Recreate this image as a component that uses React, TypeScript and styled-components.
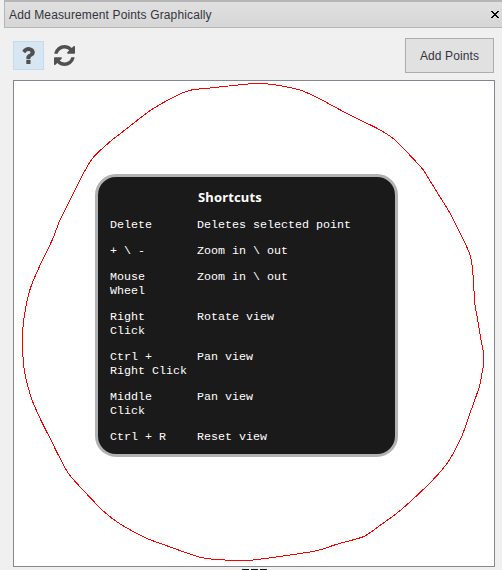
import React from "react";
import styled, { createGlobalStyle } from "styled-components";

const GlobalStyle = createGlobalStyle`
  * { box-sizing: border-box; }
  html, body { margin: 0; padding: 0; overflow: hidden; }
  body { background: #f0f0f0; font-family: "Liberation Sans", Arial, sans-serif; }
`;

const Window = styled.div`
  display: flex;
  flex-direction: column;
  width: 502px;
  height: 570px;
  overflow: hidden;
  background: #f0f0f0;
`;

const TitleBar = styled.header`
  display: flex;
  align-items: center;
  justify-content: space-between;
  flex: none;
  height: 28px;
  margin-left: 4px;
  padding: 0 3px 0 4px;
  border: solid #b5b5b5;
  border-width: 2px 0 1px 1px;
  background: linear-gradient(#e0e0e0, #d6d6d6);
`;

const Title = styled.h1`
  margin: 0;
  color: #34343c;
  font-size: 12px;
  font-weight: 400;
  line-height: 14px;
  letter-spacing: 0.135px;
  white-space: nowrap;
`;

const CloseButton = styled.button`
  display: flex;
  padding: 0;
  border: 0;
  background: none;
`;

const Toolbar = styled.div`
  display: flex;
  align-items: center;
  flex: none;
  height: 52px;
  padding: 3px 8px 0 13px;
`;

const ToolButton = styled.button<{ $active?: boolean }>`
  display: flex;
  align-items: center;
  justify-content: center;
  width: 31px;
  height: 29px;
  margin-right: 5px;
  padding: 0 0 1px;
  color: #505050;
  border: 1px solid ${(p) => (p.$active ? "#c0dcf3" : "transparent")};
  background: ${(p) => (p.$active ? "#d8e6f2" : "transparent")};
`;

const ActionButton = styled.button`
  width: 89px;
  height: 35px;
  margin-left: auto;
  padding: 0;
  color: #34343c;
  border: 1px solid #adadad;
  background: #e1e1e1;
  font: 12px/14px "Liberation Sans", Arial, sans-serif;
  letter-spacing: 0.12px;
`;

const Viewport = styled.main`
  position: relative;
  flex: none;
  width: 482px;
  height: 487px;
  margin-left: 13px;
  border: 1px solid #828790;
  background: #fff;
`;

const Outline = styled.svg`
  display: block;
  width: 480px;
  height: 485px;
`;

const ShortcutCard = styled.section`
  position: absolute;
  left: 81px;
  top: 93px;
  width: 303px;
  height: 283px;
  padding: 12px 12px 0;
  color: #fff;
  border: 3px solid #b2b2b2;
  border-radius: 21px;
  background: #1a1a1a;
`;

const CardTitle = styled.h2`
  margin: 0 0 13px 88px;
  font: 700 13px/16px "Noto Sans", "Open Sans", sans-serif;
  letter-spacing: 0.15px;
`;

const ShortcutList = styled.dl`
  display: grid;
  grid-template-columns: 87px 1fr;
  row-gap: 12px;
  margin: 0;
  font: 11.67px/14px "Courier New", "Liberation Mono", monospace;
`;

const Keys = styled.dt`
  white-space: pre;
`;

const Description = styled.dd`
  margin: 0;
  white-space: nowrap;
`;

const Grip = styled.div`
  display: flex;
  gap: 2px;
  margin: 2px 0 0 242px;
`;

const GripMark = styled.span`
  width: 7px;
  height: 1px;
  background: #111;
`;

const shortcuts = [
  { keys: "Delete", action: "Deletes selected point" },
  { keys: "+ \\ -", action: "Zoom in \\ out" },
  { keys: "Mouse\nWheel", action: "Zoom in \\ out" },
  { keys: "Right\nClick", action: "Rotate view" },
  { keys: "Ctrl +\nRight Click", action: "Pan view" },
  { keys: "Middle\nClick", action: "Pan view" },
  { keys: "Ctrl + R", action: "Reset view" },
];

const outlinePoints =
  "238,85 210,88 190,90.3 173.3,97.3 150,110.7 125,130 110,141.7 93.3,157.3 84,172.3 71.7,196.7 60,220 52.7,239 38.3,269 30.7,287.3 27.3,300 23.7,320 22.5,337 22.7,353 24.3,370 26.7,381.7 31.7,399 40,418.3 50,438.3 60,458.3 68.3,473.3 78.3,485 104,511.7 121.7,525 146.7,538.3 166.7,545.7 196.7,556.3 213.3,559.3 233.3,560.3 250,560.3 283.3,556 316.7,550.7 336.7,544.3 363.3,536.7 378.3,526.7 398.3,512 416.7,495.7 435,477.7 446.7,464 452.3,455 461.7,436.7 470,413.3 479.3,386.7 482.3,371.7 483.5,365 483.5,353.3 481,340 477.7,320 475,305 473.5,281.7 472.3,266.7 470,255 466.7,246.7 451,215 436.7,191.7 423.3,170 415,160.7 395,140 378.3,129 353.3,116.7 336.7,108 316.7,97.3 300,90 280,85.7 265,83.7 251.7,83.7";

// Closed curve through every point, with tangents taken from the neighbours.
function smoothClosedPath(points: string) {
  const pts = points.split(" ").map((p) => p.split(",").map(Number));
  const at = (i: number) => pts[(i + pts.length) % pts.length];
  const segments = pts.map((p, i) => {
    const prev = at(i - 1);
    const next = at(i + 1);
    const after = at(i + 2);
    const c1 = [0, 1].map((k) => p[k] + (next[k] - prev[k]) / 8);
    const c2 = [0, 1].map((k) => next[k] - (after[k] - p[k]) / 8);
    return `C${c1} ${c2} ${next}`;
  });
  return `M${pts[0]}${segments.join("")}Z`;
}

const outlinePath = smoothClosedPath(outlinePoints);

const QuestionIcon = () => (
  <svg width="13" height="17" viewBox="80 192 940 1280" fill="currentColor">
    <path d="M704 1192v240q0 16-12 28t-28 12h-240q-16 0-28-12t-12-28v-240q0-16 12-28t28-12h240q16 0 28 12t12 28zm316-600q0 54-15.5 101t-35 76.5-55 59.5-57.5 43.5-61 35.5q-41 23-68.5 65t-27.5 67q0 17-12 32.5t-28 15.5h-240q-15 0-25.5-18.5t-10.5-37.5v-45q0-83 65-156.5t143-108.5q59-27 84-56t25-76q0-42-46.5-74t-107.5-32q-65 0-108 29-35 25-107 115-13 16-31 16-12 0-25-8l-164-125q-13-10-15.5-25t5.5-28q160-266 464-266 80 0 161 31t146 83 106 127.5 41 158.5z" />
  </svg>
);

const RefreshIcon = () => (
  <svg width="21" height="21" viewBox="0 0 1536 1536" fill="currentColor">
    <path d="M1511 928q0 5-1 7-64 268-268 434.5t-478 166.5q-146 0-282.5-55t-243.5-157l-129 129q-19 19-45 19t-45-19-19-45v-448q0-26 19-45t45-19h448q26 0 45 19t19 45-19 45l-137 137q71 66 161 102t187 36q134 0 250-65t186-179q11-17 53-117 8-23 30-23h192q13 0 22.5 9.5t9.5 22.5zm25-800v448q0 26-19 45t-45 19h-448q-26 0-45-19t-19-45 19-45l138-138q-148-137-349-137-134 0-250 65t-186 179q-11 17-53 117-8 23-30 23h-199q-13 0-22.5-9.5t-9.5-22.5v-7q65-268 270-434.5t480-166.5q146 0 284 55.5t245 156.5l130-129q19-19 45-19t45 19 19 45z" />
  </svg>
);

const CloseIcon = () => (
  <svg width="8" height="7" viewBox="0 0 8 7" shapeRendering="crispEdges">
    <path
      d="M0 0h2v1h1v1h2v-1h1v-1h2v1h-1v1h-1v1h-1v1h1v1h1v1h1v1h-2v-1h-1v-1h-2v1h-1v1h-2v-1h1v-1h1v-1h1v-1h-1v-1h-1v-1h-1z"
      fill="#000"
    />
  </svg>
);

export default function App() {
  return (
    <>
      <GlobalStyle />
      <Window>
        <TitleBar>
          <Title>Add Measurement Points Graphically</Title>
          <CloseButton aria-label="Close">
            <CloseIcon />
          </CloseButton>
        </TitleBar>
        <Toolbar>
          <ToolButton $active aria-label="Help">
            <QuestionIcon />
          </ToolButton>
          <ToolButton aria-label="Refresh">
            <RefreshIcon />
          </ToolButton>
          <ActionButton>Add Points</ActionButton>
        </Toolbar>
        <Viewport>
          <Outline viewBox="14 81 480 485">
            <path
              d={outlinePath}
              fill="none"
              stroke="#f00"
              strokeWidth="1"
              shapeRendering="crispEdges"
            />
          </Outline>
          <ShortcutCard>
            <CardTitle>Shortcuts</CardTitle>
            <ShortcutList>
              {shortcuts.map((s) => (
                <React.Fragment key={s.keys}>
                  <Keys>{s.keys}</Keys>
                  <Description>{s.action}</Description>
                </React.Fragment>
              ))}
            </ShortcutList>
          </ShortcutCard>
        </Viewport>
        <Grip>
          <GripMark />
          <GripMark />
          <GripMark />
        </Grip>
      </Window>
    </>
  );
}
